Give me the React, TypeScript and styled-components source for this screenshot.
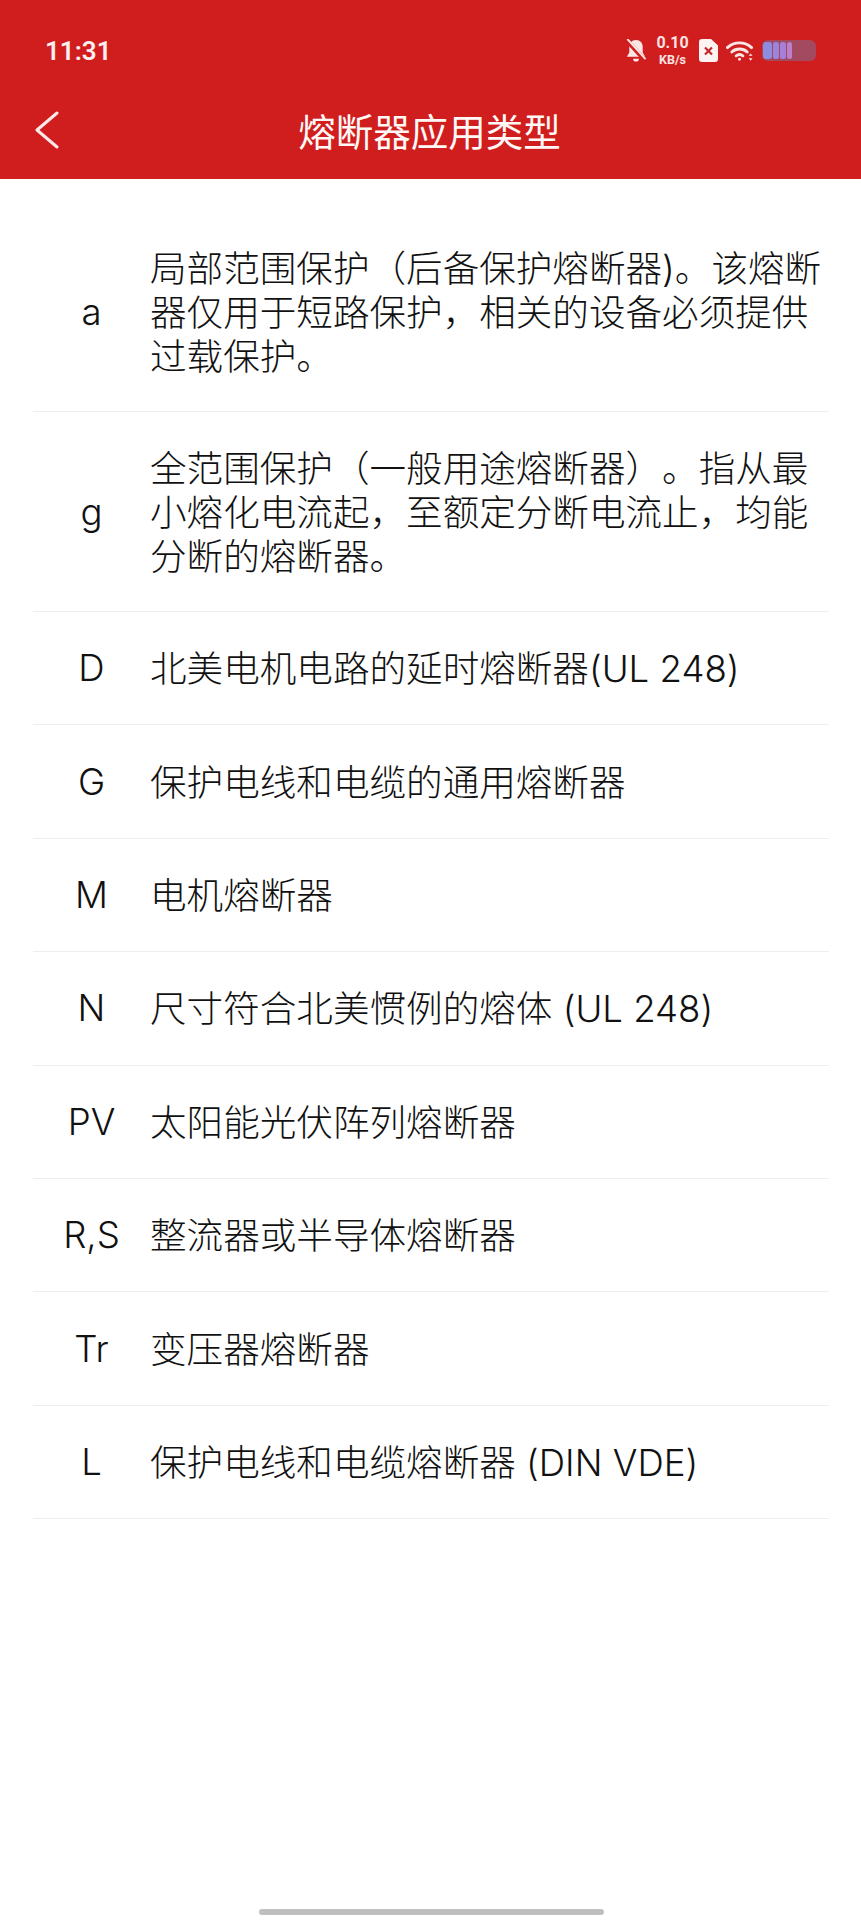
import React from "react";
import styled, { createGlobalStyle } from "styled-components";

const Global = createGlobalStyle`
  html, body { margin: 0; padding: 0; background: #fff; }
  body { font-family: "Inter", "Noto Sans CJK SC", sans-serif; text-spacing-trim: space-all; }
`;
const Page = styled.div`
  width: 861px; height: 1920px; display: flex; flex-direction: column; background: #fff; overflow: hidden;
`;
const Header = styled.header`
  height: 179px; background: #d01e1f; color: #fff; display: flex; flex-direction: column; flex: none;
`;
const StatusBar = styled.div`
  height: 98px; box-sizing: border-box; padding: 3px 45px 0 45px; display: flex; align-items: center; justify-content: space-between;
`;
const Time = styled.span`
  font: 600 26px "Roboto", sans-serif; color: #fbeeee;
`;
const StatusIcons = styled.div`
  display: flex; align-items: center; gap: 8px;
`;
const Speed = styled.div`
  display: flex; flex-direction: column; align-items: center; margin: 0 2px; width: 33px; font-family: "Roboto", sans-serif; font-weight: 700; color: #fbe3e3;
`;
const SpeedValue = styled.span`
  font-size: 16px; line-height: 18px;
`;
const SpeedUnit = styled.span`
  font-size: 12.500px; line-height: 16px;
`;
const NavBar = styled.div`
  height: 64px; display: grid; grid-template-columns: 79px 1fr 81px; align-items: center; padding-bottom: 16px;
`;
const Back = styled.div`
  display: flex; padding-left: 35px; align-items: center;
`;
const Title = styled.h1`
  margin: 0; text-align: center; font: 400 37.500px/44px "Noto Sans CJK SC", sans-serif; color: #fff8f6; white-space: nowrap;
`;
const List = styled.main`
  display: flex; flex-direction: column; padding: 33px 32px 0 33px; flex: none;
`;
const Row = styled.div`
  display: grid; grid-template-columns: 117px 1fr; align-items: center; box-sizing: border-box; min-height: 113.400px;
  padding: 34.500px 0 32.500px; border-bottom: 1px solid #eeeeee; color: #111111;
`;
const Label = styled.div`
  text-align: center; font: 300 36.600px/44px "Inter", "Noto Sans CJK SC", sans-serif; margin-top: -2px;
`;
const Text = styled.div`
  font: 300 36.600px/44px "Inter", "Noto Sans CJK SC", sans-serif; white-space: pre; margin-right: -20px;
`;
const Spacer = styled.div`flex: 1;`;
const HomeBar = styled.div`
  width: 345px; height: 6px; background: #bfbfbf; border-radius: 3px; align-self: center; margin-bottom: 5px; margin-left: 2px;
`;

const rows: [string, string][] = [
  ["a", "局部范围保护（后备保护熔断器)。该熔断\n器仅用于短路保护，相关的设备必须提供\n过载保护。"],
  ["g", "全范围保护（一般用途熔断器）。指从最\n小熔化电流起，至额定分断电流止，均能\n分断的熔断器。"],
  ["D", "北美电机电路的延时熔断器(UL 248)"],
  ["G", "保护电线和电缆的通用熔断器"],
  ["M", "电机熔断器"],
  ["N", "尺寸符合北美惯例的熔体 (UL 248)"],
  ["PV", "太阳能光伏阵列熔断器"],
  ["R,S", "整流器或半导体熔断器"],
  ["Tr", "变压器熔断器"],
  ["L", "保护电线和电缆熔断器 (DIN VDE)"],
];

const BellOff = () => (
  <svg width="20" height="23" viewBox="0 0 20 24">
    <path d="M10 1c4.500 0 7 3.500 7 7v6l2.500 4.500H.5L3 14V8c0-3.500 2.500-7 7-7z" fill="#fbe6e6" />
    <path d="M7 20.500a3 3 0 0 0 6 0z" fill="#fbe6e6" />
    <path d="M0 1l20 22" stroke="#d01e1f" strokeWidth="4.500" />
    <path d="M1 0l19 21" stroke="#fbe6e6" strokeWidth="2" />
  </svg>
);
const Sim = () => (
  <svg width="19" height="23" viewBox="0 0 19 23">
    <path d="M3 0h9l7 6.500V20a3 3 0 0 1-3 3H3a3 3 0 0 1-3-3V3a3 3 0 0 1 3-3z" fill="#fdf3f3" />
    <path d="M6 8.500l7 7M13 8.500l-7 7" stroke="#c5282a" strokeWidth="2.200" />
  </svg>
);
const Wifi = () => (
  <svg width="28" height="22" viewBox="0 0 29 22" fill="none" stroke="#fbe6e6" strokeWidth="3" strokeLinecap="round">
    <path d="M1.500 7.500C8.500 1 19.500 1 26.500 7.500" />
    <path d="M6 12c4.500-4 11.500-4 16 0" />
    <path d="M10.500 16c2-1.500 5-1.500 7 0" />
    <circle cx="14" cy="19.500" r="1.500" fill="#fbe6e6" stroke="none" />
    <path d="M25.500 13.500l-2 2.500h4zM25.500 21l-2-2.500h4z" fill="#fbe6e6" stroke="none" />
  </svg>
);
const Battery = () => (
  <svg width="54" height="21" viewBox="0 0 54 21">
    <rect width="54" height="21" rx="6" fill="#a44a60" />
    <rect x="1" y="2" width="9" height="17" rx="3" fill="#8f8ce0" />
    <rect x="11" y="2" width="6" height="17" rx="2.500" fill="#9a84dc" />
    <rect x="18" y="2" width="6" height="17" rx="2.500" fill="#a57fd8" />
    <rect x="25" y="2" width="5" height="17" rx="2.500" fill="#bb80cc" />
  </svg>
);
const Chevron = () => (
  <svg width="24" height="38" viewBox="0 0 24 38" fill="none" stroke="#fbe9e7" strokeWidth="3" strokeLinecap="round" strokeLinejoin="round">
    <path d="M22 2L2 19l20 17" />
  </svg>
);

export default function App() {
  return (
    <Page>
      <Global />
      <Header>
        <StatusBar>
          <Time>11:31</Time>
          <StatusIcons>
            <BellOff />
            <Speed><SpeedValue>0.10</SpeedValue><SpeedUnit>KB/s</SpeedUnit></Speed>
            <Sim />
            <Wifi />
            <Battery />
          </StatusIcons>
        </StatusBar>
        <NavBar>
          <Back><Chevron /></Back>
          <Title>熔断器应用类型</Title>
          <div />
        </NavBar>
      </Header>
      <List>
        {rows.map(([l, t]) => (
          <Row key={l}>
            <Label>{l}</Label>
            <Text>{t}</Text>
          </Row>
        ))}
      </List>
      <Spacer />
      <HomeBar />
    </Page>
  );
}
